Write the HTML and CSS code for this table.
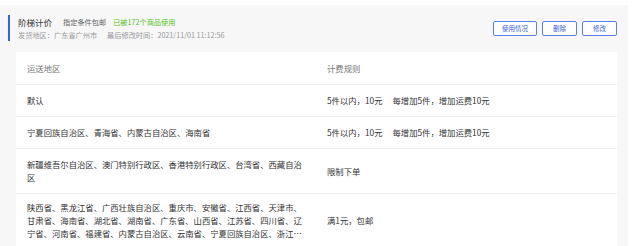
FILE: index.html
```html
<!DOCTYPE html>
<html lang="zh-CN">
<head>
<meta charset="utf-8">
<link rel="stylesheet" href="styles.css">
</head>
<body>
<div class="panel">
  <div class="head">
    <div class="info">
      <div class="title-row">
        <span class="title">阶梯计价</span>
        <span class="tag">指定条件包邮</span>
        <span class="used">已被172个商品使用</span>
      </div>
      <div class="sub-row">
        <span>发货地区：广东省广州市</span>
        <span class="time">最后修改时间：2021/11/01 11:12:56</span>
      </div>
    </div>
    <div class="actions">
      <button class="btn btn-wide">使用情况</button>
      <button class="btn">删除</button>
      <button class="btn">修改</button>
    </div>
  </div>
  <div class="table">
    <div class="row row-head">
      <div class="cell">运送地区</div>
      <div class="cell">计费规则</div>
    </div>
    <div class="row">
      <div class="cell">默认</div>
      <div class="cell">5件以内，10元<span class="step">每增加5件，增加运费10元</span></div>
    </div>
    <div class="row">
      <div class="cell">宁夏回族自治区、青海省、内蒙古自治区、海南省</div>
      <div class="cell">5件以内，10元<span class="step">每增加5件，增加运费10元</span></div>
    </div>
    <div class="row">
      <div class="cell">新疆维吾尔自治区、澳门特别行政区、香港特别行政区、台湾省、西藏自治区</div>
      <div class="cell">限制下单</div>
    </div>
    <div class="row row-last">
      <div class="cell"><div class="clamp">陕西省、黑龙江省、广西壮族自治区、重庆市、安徽省、江西省、天津市、甘肃省、海南省、湖北省、湖南省、广东省、山西省、江苏省、四川省、辽宁省、河南省、福建省、内蒙古自治区、云南省、宁夏回族自治区、浙江省、贵州省、吉林省、山东省、河北省</div></div>
      <div class="cell">满1元，包邮</div>
    </div>
  </div>
</div>
</body>
</html>
```

FILE: styles.css
```css
html, body {
  margin: 0;
  padding: 0;
  background: #ffffff;
}
body {
  font-family: "Noto Sans CJK SC", "Noto Sans", sans-serif;
  color: #333333;
}
.panel {
  margin-top: 5px;
  width: 628px;
  min-height: 241px;
  box-sizing: border-box;
  background: #f7f7f8;
  padding: 10px 11px 0 0;
}
.head {
  display: flex;
  align-items: center;
  justify-content: space-between;
  padding-left: 8px;
}
.info {
  border-left: 2px solid #3a63e0;
  padding-left: 8px;
  display: flex;
  flex-direction: column;
}
.title-row {
  display: flex;
  align-items: center;
  height: 14px;
  white-space: nowrap;
}
.title {
  font-size: 8.5px;
  color: #333333;
  margin-right: 11px;
}
.tag {
  font-size: 7.2px;
  color: #666666;
  margin-right: 7px;
}
.used {
  font-size: 7.2px;
  color: #52c41a;
}
.sub-row {
  display: flex;
  align-items: center;
  height: 12px;
  font-size: 7.2px;
  color: #999999;
  white-space: nowrap;
}
.time {
  margin-left: 10px;
}
.actions {
  display: flex;
  gap: 5px;
}
.btn {
  height: 15px;
  min-width: 35px;
  padding: 0 8px;
  box-sizing: border-box;
  border: 1px solid #5b7fe6;
  border-radius: 2px;
  background: #ffffff;
  color: #3a62d9;
  font-family: "Noto Sans CJK SC", sans-serif;
  font-size: 6.5px;
  line-height: 13px;
  text-align: center;
}
.btn-wide {
  min-width: 44px;
}
.table {
  margin: 11px 0 0 16px;
  background: #ffffff;
  font-size: 8.33px;
  line-height: 13px;
}
.row {
  display: grid;
  grid-template-columns: 300px 1fr;
  align-items: center;
  border-bottom: 1px solid #f0f0f0;
}
.cell {
  padding: 9px 11px;
}
.row-head .cell {
  color: #777777;
  padding: 10px 11px 9px;
}
.row-last .cell {
  padding-top: 7px;
}
.step {
  margin-left: 10px;
}
.clamp {
  display: -webkit-box;
  -webkit-box-orient: vertical;
  -webkit-line-clamp: 3;
  overflow: hidden;
}
```
